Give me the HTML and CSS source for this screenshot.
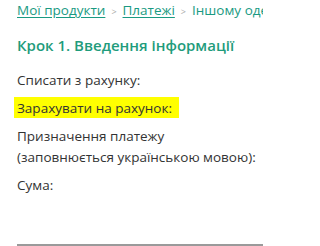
FILE: index.html
```html
<!DOCTYPE html>
<html lang="uk">
<head>
<meta charset="utf-8">
<link rel="stylesheet" href="styles.css">
</head>
<body>
<div class="page">
  <nav class="crumbs">
    <a class="crumb" href="#">Мої продукти</a>
    <span class="sep">&gt;</span>
    <a class="crumb" href="#">Платежі</a>
    <span class="sep">&gt;</span>
    <span class="current">Іншому одержувачу</span>
  </nav>
  <h1 class="title">Крок 1. Введення інформації</h1>
  <div class="form">
    <div class="label">Списати з рахунку:</div>
    <div class="label"><span class="mark">Зарахувати на рахунок:</span></div>
    <div class="label">Призначення платежу<br>(заповнюється українською мовою):</div>
    <div class="label">Сума:</div>
  </div>
  <div class="rule"></div>
</div>
</body>
</html>
```
FILE: styles.css
```css
html, body {
  margin: 0;
  padding: 0;
  background: #fff;
}
body {
  font-family: "Open Sans", "Noto Sans", sans-serif;
  color: #333;
  overflow: hidden;
  width: 263px;
  height: 246px;
}
.page {
  display: flex;
  flex-direction: column;
  height: 246px;
  box-sizing: border-box;
  padding-left: 17px;
  overflow: hidden;
}
.crumbs {
  display: flex;
  align-items: baseline;
  white-space: nowrap;
  font-size: 13.5px;
  line-height: 20px;
  height: 20px;
  flex: none;
}
.crumb {
  color: #1a9a82;
  text-decoration: underline;
  text-underline-offset: 2px;
}
.sep {
  color: #aaa;
  font-size: 9px;
  margin: 0 6px;
}
.current {
  color: #1a9a82;
}
.title {
  margin: 14px 0 0;
  font-size: 15px;
  line-height: 22px;
  font-weight: 600;
  color: #1f9c7c;
  white-space: nowrap;
  flex: none;
}
.form {
  display: flex;
  flex-direction: column;
  gap: 7px;
  margin-top: 14px;
  font-size: 13.5px;
  line-height: 21px;
  white-space: nowrap;
}
.mark {
  background: #ffff00;
  padding: 2px 7px 1px 3px;
  margin-left: -3px;
}
.rule {
  margin-top: auto;
  margin-bottom: 0;
  height: 2px;
  background: #9a9a9a;
  flex: none;
}
```
